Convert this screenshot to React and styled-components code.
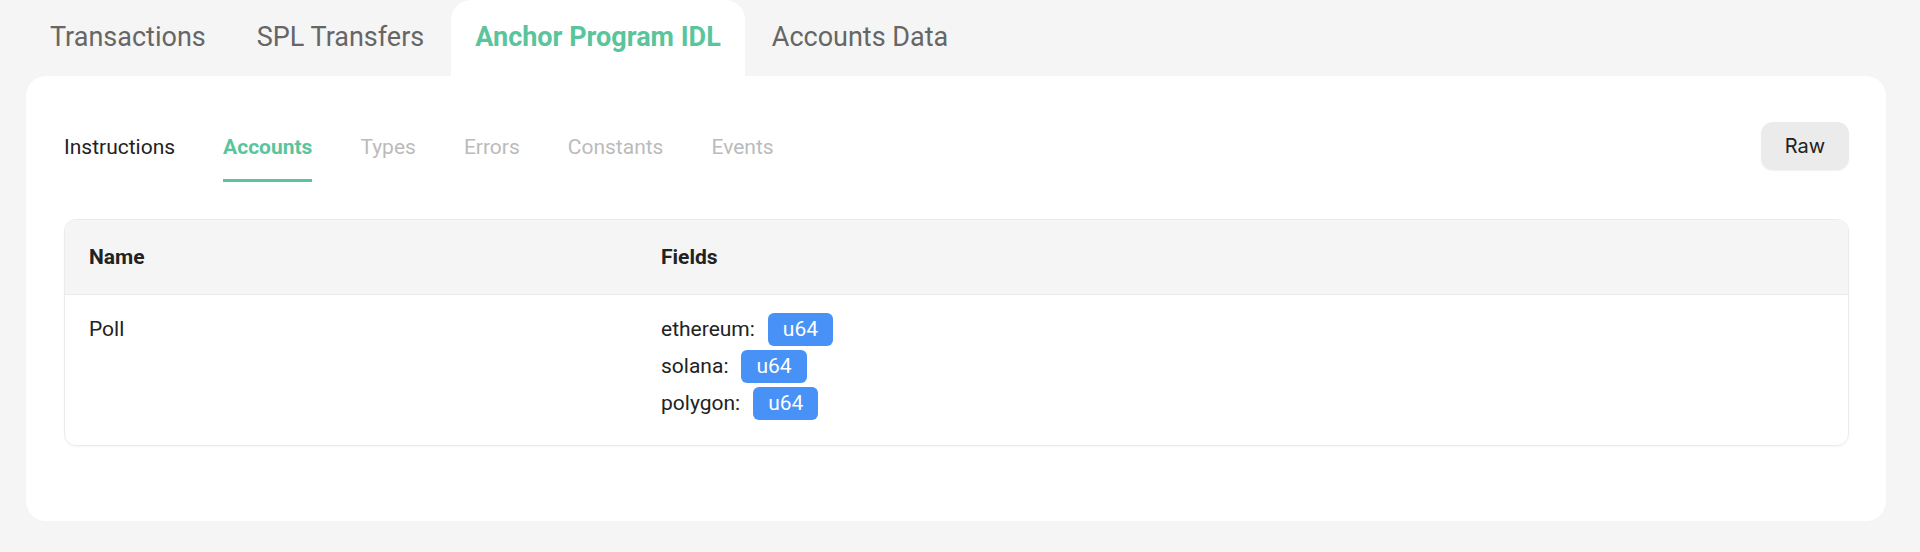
import styled, { createGlobalStyle } from "styled-components";

const GlobalStyle = createGlobalStyle`
  body {
    margin: 0;
    background-color: #F5F5F5;
    font-family: Roboto, "Liberation Sans", sans-serif;
    color: #222222;
  }
`;

const PageDiv = styled.div`
  padding: 0 34px 31px 26px;
`;

const TabBar = styled.nav`
  height: 76px;

  display: flex;
  flex-direction: row;
  align-items: stretch;
  gap: 3px;
`;

const Tab = styled.div`
  padding: 0 24px 2px 24px;

  display: flex;
  align-items: center;

  background-color: ${ props => (props.isActive ? '#FFFFFF' : 'transparent') };
  border-radius: 20px 20px 0 0;

  color: ${ props => (props.isActive ? '#5AC59C' : '#666666') };
  font-size: 27px;
  font-weight: ${ props => (props.isActive ? 700 : 400) };

  cursor: pointer;
`;

const Card = styled.section`
  padding: 46px 37px 75px 38px;

  background-color: #FFFFFF;
  border-radius: 20px;
`;

const Toolbar = styled.div`
  margin-bottom: 37px;

  display: flex;
  flex-direction: row;
  justify-content: space-between;
  align-items: flex-start;
`;

const SubTabList = styled.div`
  display: flex;
  flex-direction: row;
  gap: 48px;
`;

const SubTab = styled.div`
  padding: 13px 0 20px 0;

  border-bottom: 3px solid ${ props => (props.isActive ? '#5AC59C' : 'transparent') };

  color: ${ props => (props.isActive ? '#5AC59C' : (props.isDisabled ? '#BBBBBB' : '#222222')) };
  font-size: 21px;
  line-height: 24px;
  font-weight: ${ props => (props.isActive ? 700 : 400) };

  cursor: ${ props => (props.isDisabled ? 'default' : 'pointer') };
`;

const RawButton = styled.button`
  width: 88px;
  height: 48px;

  background-color: #EBEBEB;
  border: none;
  border-radius: 12px;
  box-shadow: 0 1px 2px rgba(0, 0, 0, 0.06);

  color: #222222;
  font-family: Inter, "Open Sans", sans-serif;
  font-size: 20px;

  cursor: pointer;

  &:hover {
    background-color: #E2E2E2;
  }
`;

const Table = styled.div`
  border: 1px solid #EBEBEB;
  border-radius: 12px;
  box-shadow: 0 1px 2px rgba(0, 0, 0, 0.04);
  overflow: hidden;
`;

const TableRow = styled.div`
  display: grid;
  grid-template-columns: 572px 1fr;
`;

const HeaderRow = styled(TableRow)`
  height: 74px;

  background-color: #F5F5F5;
  border-bottom: 1px solid #EBEBEB;
`;

const HeaderCell = styled.div`
  padding: 0 24px;

  display: flex;
  align-items: center;

  font-size: 21px;
  font-weight: 700;
`;

const BodyCell = styled.div`
  padding: 18px 24px 25px 24px;

  font-size: 21px;
  line-height: 33px;
`;

const FieldList = styled.div`
  display: flex;
  flex-direction: column;
  gap: 4px;
`;

const FieldRow = styled.div`
  height: 33px;

  display: flex;
  flex-direction: row;
  align-items: center;
  gap: 13px;
`;

const TypeBadge = styled.span`
  padding: 0 15px;

  height: 33px;

  display: inline-block;

  background-color: #4791F7;
  border-radius: 6px;

  color: #FFFFFF;
  font-size: 21px;
  line-height: 33px;
`;

const mainTabs = ['Transactions', 'SPL Transfers', 'Anchor Program IDL', 'Accounts Data'];

const subTabs = [
  { name: 'Instructions' },
  { name: 'Accounts', isActive: true },
  { name: 'Types', isDisabled: true },
  { name: 'Errors', isDisabled: true },
  { name: 'Constants', isDisabled: true },
  { name: 'Events', isDisabled: true },
];

const accounts = [
  {
    name: 'Poll',
    fields: [
      { name: 'ethereum', type: 'u64' },
      { name: 'solana', type: 'u64' },
      { name: 'polygon', type: 'u64' },
    ],
  },
];

export default function App() {
  return (
    <PageDiv>
      <GlobalStyle />

      <TabBar>
        {mainTabs.map(tab => (
          <Tab key={ tab } isActive={ tab === 'Anchor Program IDL' }>{ tab }</Tab>
        ))}
      </TabBar>

      <Card>
        <Toolbar>
          <SubTabList>
            {subTabs.map(tab => (
              <SubTab key={ tab.name } isActive={ tab.isActive } isDisabled={ tab.isDisabled }>{ tab.name }</SubTab>
            ))}
          </SubTabList>
          <RawButton>Raw</RawButton>
        </Toolbar>

        <Table>
          <HeaderRow>
            <HeaderCell>Name</HeaderCell>
            <HeaderCell>Fields</HeaderCell>
          </HeaderRow>

          {accounts.map(account => (
            <TableRow key={ account.name }>
              <BodyCell>{ account.name }</BodyCell>
              <BodyCell>
                <FieldList>
                  {account.fields.map(field => (
                    <FieldRow key={ field.name }>
                      { field.name }:
                      <TypeBadge>{ field.type }</TypeBadge>
                    </FieldRow>
                  ))}
                </FieldList>
              </BodyCell>
            </TableRow>
          ))}
        </Table>
      </Card>
    </PageDiv>
  );
}
